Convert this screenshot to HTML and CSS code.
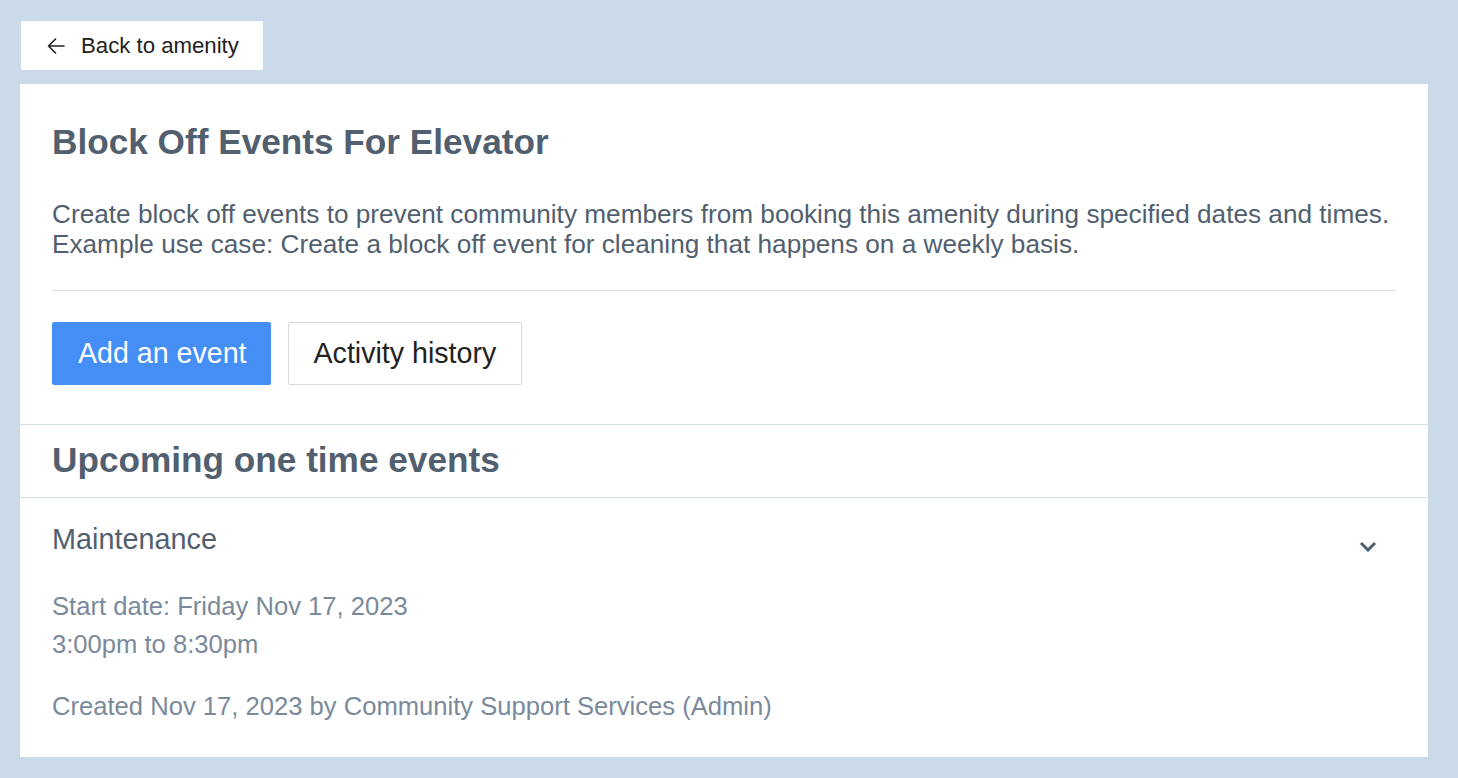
FILE: index.html
```html
<!DOCTYPE html>
<html lang="en">
<head>
<meta charset="utf-8">
<title>Block Off Events For Elevator</title>
<link rel="stylesheet" href="styles.css">
</head>
<body>
<div class="page">
  <a class="back" href="#">
    <svg class="back-icon" width="18" height="16" viewBox="0 0 18 16" aria-hidden="true"><path d="M17 8H1.5M8.5 1L1.5 8l7 7" fill="none" stroke="#222" stroke-width="1.6" stroke-linecap="round" stroke-linejoin="round"/></svg>
    <span>Back to amenity</span>
  </a>
  <main class="card">
    <section class="card-head">
      <h1 class="title">Block Off Events For Elevator</h1>
      <p class="desc">Create block off events to prevent community members from booking this amenity during specified dates and times.<br>Example use case: Create a block off event for cleaning that happens on a weekly basis.</p>
      <div class="divider"></div>
      <div class="actions">
        <button class="btn btn-primary">Add an event</button>
        <button class="btn btn-default">Activity history</button>
      </div>
    </section>
    <section class="upcoming">
      <h2 class="section-title">Upcoming one time events</h2>
    </section>
    <section class="event">
      <div class="event-row">
        <div class="event-name">Maintenance</div>
        <svg class="chev" width="18" height="11" viewBox="0 0 18 11" aria-hidden="true"><path d="M2 2l7 7 7-7" fill="none" stroke="#515f6f" stroke-width="3"/></svg>
      </div>
      <div class="event-details">
        <div class="line">Start date: Friday Nov 17, 2023</div>
        <div class="line">3:00pm to 8:30pm</div>
        <div class="line created">Created Nov 17, 2023 by Community Support Services (Admin)</div>
      </div>
    </section>
  </main>
</div>
</body>
</html>
```
FILE: styles.css
```css
html, body {
  margin: 0;
  padding: 0;
  background: #cbdae8;
}
body {
  font-family: "Liberation Sans", Arial, Helvetica, sans-serif;
}
.page {
  padding: 21px 30px 20px 20px;
}
.back {
  display: inline-flex;
  align-items: center;
  box-sizing: border-box;
  height: 49px;
  margin-left: 1px;
  padding: 0 24px 0 26px;
  background: #fff;
  border-radius: 2px;
  color: #222;
  text-decoration: none;
  font-size: 22.2px;
}
.back-icon {
  margin-right: 16px;
}
.card {
  display: block;
  margin-top: 14px;
  background: #fff;
}
.card-head {
  padding: 37px 32px 39px;
  border-bottom: 1px solid #d5e0ea;
}
.title {
  margin: 0;
  font-size: 35.2px;
  line-height: 42px;
  font-weight: 700;
  color: #515f6f;
}
.desc {
  margin: 36px 0 0;
  font-size: 26.2px;
  line-height: 30px;
  color: #515f6f;
}
.divider {
  height: 1px;
  background: #d5e0ea;
  margin-top: 31px;
}
.actions {
  display: flex;
  gap: 17px;
  margin-top: 31px;
}
.btn {
  box-sizing: border-box;
  height: 63px;
  font-family: inherit;
  font-size: 28.6px;
  border-radius: 2px;
  cursor: pointer;
}
.btn-primary {
  padding: 0 23px 0 25px;
  background: #448ef6;
  border: 1px solid #448ef6;
  color: #fff;
}
.btn-default {
  padding: 0 25px;
  background: #fff;
  border: 1px solid #d9d9d9;
  color: #222;
}
.upcoming {
  padding: 14px 32px 16px;
  border-bottom: 1px solid #d5e0ea;
}
.section-title {
  margin: 0;
  font-size: 35.2px;
  line-height: 42px;
  font-weight: 700;
  color: #515f6f;
}
.event {
  padding: 23px 51px 32px 32px;
}
.event-row {
  display: flex;
  align-items: center;
  justify-content: space-between;
}
.event-name {
  font-size: 28.8px;
  line-height: 36px;
  color: #515f6f;
}
.chev {
  margin-top: 14px;
}
.event-details {
  margin-top: 30px;
  font-size: 25.6px;
  line-height: 38px;
  color: #7b8a9b;
}
.created {
  margin-top: 24px;
}
```
